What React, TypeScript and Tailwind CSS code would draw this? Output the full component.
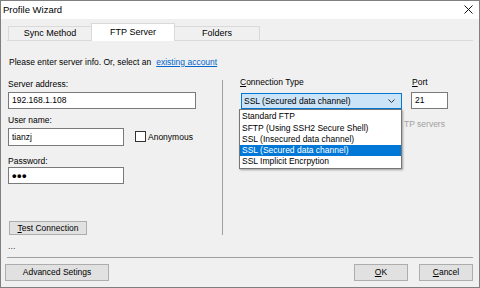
import React from "react";

const font = { fontFamily: '"Liberation Sans", Arial, sans-serif' };

function Btn({ children, className }: { children: React.ReactNode; className: string }) {
  return (
    <div
      className={
        "flex items-center justify-center bg-[#e1e1e1] border border-[#adadad] text-[8.5px] leading-none text-black " +
        className
      }
    >
      {children}
    </div>
  );
}

export default function App() {
  const items = [
    "Standard FTP",
    "SFTP (Using SSH2 Secure Shell)",
    "SSL (Insecured data channel)",
    "SSL (Secured data channel)",
    "SSL Implicit Encrpytion",
  ];
  return (
    <div
      style={font}
      className="w-[480px] h-[288px] border border-[#7f7f7f] bg-[#f0f0f0] flex flex-col text-black overflow-hidden"
    >
      {/* Title bar */}
      <div className="h-[18px] bg-white flex items-center justify-between pl-[2px] pr-[6px] shrink-0">
        <span className="text-[9.5px] leading-none text-black">Profile Wizard</span>
        <svg width="9" height="9" viewBox="0 0 9 9" className="mt-[-1px]">
          <path d="M0.5 0.5 L8.5 8.5 M8.5 0.5 L0.5 8.5" stroke="#111" strokeWidth="1" />
        </svg>
      </div>

      {/* Tabs */}
      <div className="mt-[4px] mx-[6px] h-[18px] flex items-end border-b border-[#d9d9d9] shrink-0">
        <div className="ml-[1px] w-[83px] h-[14px] border-t border-l border-[#d9d9d9] bg-[#f0f0f0] flex items-center justify-center text-[9px] leading-none">
          Sync Method
        </div>
        <div className="w-[84px] h-[18px] -mb-px border-t border-l border-r border-[#d9d9d9] bg-white flex items-center justify-center text-[9px] leading-none">
          FTP Server
        </div>
        <div className="w-[85px] h-[14px] border-t border-r border-[#d9d9d9] bg-[#f0f0f0] flex items-center justify-center text-[9px] leading-none">
          Folders
        </div>
      </div>

      {/* Panel */}
      <div className="pl-[8px] mt-[15px] h-[12px] flex items-center text-[8.5px] leading-none">
        <span>Please enter server info. Or, select an</span>
        <span className="ml-[5px] text-[#0066cc] underline">existing account</span>
      </div>

      <div className="mt-[10px] flex">
        {/* Left column */}
        <div className="w-[221px] pl-[7px] flex flex-col text-[8.5px] leading-none">
          <div className="h-[12px] flex items-center">Server address:</div>
          <div className="mt-[2px] w-[188px] h-[17px] bg-white border border-[#7a7a7a] flex items-center pl-[3px]">
            192.168.1.108
          </div>
          <div className="mt-[5px] h-[12px] flex items-center">User name:</div>
          <div className="mt-[2px] flex items-center">
            <div className="w-[116px] h-[18px] bg-white border border-[#7a7a7a] flex items-center pl-[3px]">
              tianzj
            </div>
            <div className="ml-[11px] mt-[-1px] w-[11px] h-[11px] bg-white border border-[#333333]" />
            <span className="ml-[2px]">Anonymous</span>
          </div>
          <div className="mt-[9px] h-[12px] flex items-center">Password:</div>
          <div className="w-[116px] h-[17px] bg-white border border-[#7a7a7a] flex items-center pl-[3px]">
            <span className="text-[13px] font-bold tracking-[0.5px] leading-none">•••</span>
          </div>
          <Btn className="mt-[37px] ml-[1px] w-[78px] h-[14px]">
            <span>
              <u>T</u>est Connection
            </span>
          </Btn>
          <div className="mt-[5px] h-[12px] flex items-center text-[9px] text-[#444444]">
            ...
          </div>
        </div>

        {/* Divider */}
        <div className="mt-[2px] w-px h-[155px] bg-[#a0a0a0]" />

        {/* Right column */}
        <div className="pl-[17px] -mt-[2px] flex flex-col text-[8.5px] leading-none">
          <div className="flex">
            <div className="w-[162px] flex flex-col">
              <div className="h-[12px] flex items-center">
                <span>
                  <u>C</u>onnection Type
                </span>
              </div>
              <div className="relative mt-[5px] ml-[1px]">
                <div className="w-[161px] h-[16px] bg-[#cce4f7] border border-[#0078d7] flex items-center justify-between pl-[2px] pr-[6px]">
                  <span>SSL (Secured data channel)</span>
                  <svg width="7" height="4" viewBox="0 0 7 4">
                    <path d="M0.5 0.5 L3.5 3.5 L6.5 0.5" stroke="#333" strokeWidth="1" fill="none" />
                  </svg>
                </div>
                <div className="absolute z-10 top-full left-[-2px] w-[163px] bg-white border border-[#767676] shadow-[1px_1px_2px_rgba(0,0,0,0.35)] pt-[1px] pb-[1px]">
                  {items.map((t, i) => (
                    <div
                      key={t}
                      className={
                        "h-[11.25px] flex items-center pl-[2px] whitespace-nowrap " +
                        (i === 3 ? "bg-[#0078d7] text-white" : "text-black")
                      }
                    >
                      {t}
                    </div>
                  ))}
                </div>
              </div>
            </div>
            <div className="ml-[9px] flex flex-col">
              <div className="h-[12px] flex items-center ml-[1px]">
                <span>
                  <u>P</u>ort
                </span>
              </div>
              <div className="mt-[4px] w-[37px] h-[17px] bg-white border border-[#7a7a7a] flex items-center pl-[3px]">
                21
              </div>
            </div>
          </div>
          <div className="mt-[9px] pl-[164px] h-[12px] flex items-center text-[#a0a0a0] whitespace-nowrap">
            TP servers
          </div>
        </div>
      </div>

      {/* Bottom separator */}
      <div className="mt-auto mx-[6px] h-px bg-[#a0a0a0]" />
      <div className="mt-[6px] mb-[6px] flex items-center pl-[4px] pr-[6px]">
        <Btn className="w-[104px] h-[17px]">Advanced Setings</Btn>
        <div className="flex-1" />
        <Btn className="w-[54px] h-[17px]">
          <span>
            <u>O</u>K
          </span>
        </Btn>
        <Btn className="ml-[11px] w-[54px] h-[17px]">
          <span>
            <u>C</u>ancel
          </span>
        </Btn>
      </div>
    </div>
  );
}
